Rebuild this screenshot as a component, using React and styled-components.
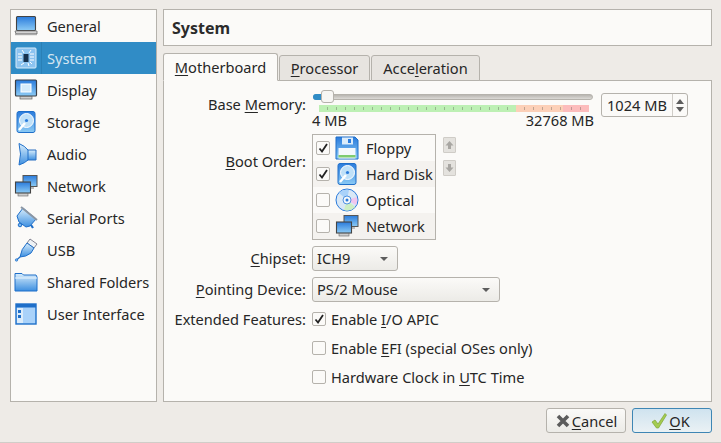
import React from "react";
import styled, { createGlobalStyle } from "styled-components";

const Global = createGlobalStyle`
  html, body { margin: 0; padding: 0; background: #eeebe7; }
  body { font-family: "Noto Sans", "Open Sans", sans-serif; font-size: 14.6px; color: #262626; }
`;

const Dialog = styled.div`
  width: 721px;
  height: 443px;
  box-sizing: border-box;
  padding: 9px 9px 0 10px;
  background: #eeebe7;
  border-bottom: 1px solid #d0cdc8;
  display: flex;
  flex-direction: column;
  overflow: hidden;
`;
const Top = styled.div`
  display: flex;
  gap: 6px;
  height: 393px;
`;
const Sidebar = styled.div`
  width: 147px;
  box-sizing: border-box;
  background: #fbfaf8;
  border: 1px solid #b5b2ac;
`;
const NavItem = styled.div`
  height: 32px;
  display: flex;
  align-items: center;
  padding-left: 3px;
  box-sizing: border-box;
  background: ${(p) => (p.$active ? "#308cc6" : "transparent")};
  color: ${(p) => (p.$active ? "#d4e6f2" : "#262626")};
`;
const NavIconCell = styled.div`
  width: 27px;
  height: 100%;
  flex: none;
  display: flex;
  align-items: center;
  border-right: 1px solid ${(p) => (p.$active ? "#2a80b6" : "transparent")};
`;
const NavText = styled.span`
  padding-left: 5px;
  line-height: 30px;
  white-space: nowrap;
`;
const Right = styled.div`
  flex: 1;
  display: flex;
  flex-direction: column;
`;
const Title = styled.div`
  height: 37px;
  box-sizing: border-box;
  background: #fbfaf8;
  border: 1px solid #b5b2ac;
  font-weight: 700;
  font-size: 16px;
  padding-left: 8px;
  line-height: 36px;
  margin-bottom: 7px;
  color: #2b2b2b;
`;
const TabBar = styled.div`
  display: flex;
  align-items: flex-end;
  height: 28px;
  gap: 1px;
  position: relative;
  z-index: 1;
  margin-bottom: -1px;
`;
const Tab = styled.div`
  box-sizing: border-box;
  width: ${(p) => p.$w}px;
  height: ${(p) => (p.$active ? 28 : 26)}px;
  border: 1px solid #b5b2ac;
  border-bottom: ${(p) => (p.$active ? "1px solid #fbfaf8" : "1px solid #b5b2ac")};
  border-radius: 3px 3px 0 0;
  background: ${(p) => (p.$active ? "#fbfaf8" : "#e7e4e0")};
  text-align: center;
  line-height: ${(p) => (p.$active ? 26 : 24)}px;
`;
const Pane = styled.div`
  flex: 1;
  box-sizing: border-box;
  background: #fbfaf8;
  border: 1px solid #b5b2ac;
  padding: 9px 0 0 10px;
  display: grid;
  grid-template-columns: 132px 1fr;
  column-gap: 6px;
  align-content: start;
`;
const Label = styled.div`
  text-align: right;
  line-height: 20px;
  white-space: nowrap;
  margin-top: ${(p) => p.$top || 0}px;
`;
const Field = styled.div`
  margin-top: ${(p) => p.$top || 0}px;
  min-width: 0;
`;
const MemoryRow = styled.div`
  display: flex;
  gap: 7px;
`;
const SliderCol = styled.div`
  width: 282px;
  flex: none;
`;
const Track = styled.div`
  position: relative;
  height: 6px;
  margin: 4px 1px 0;
  border-radius: 3px;
  background: linear-gradient(#b8b5b0, #dcdad6);
  border: 1px solid #b5b2ac;
  box-sizing: border-box;
`;
const TrackFill = styled.div`
  position: absolute;
  left: -1px;
  top: -1px;
  height: 6px;
  width: 10px;
  border-radius: 3px 0 0 3px;
  background: #308cc6;
`;
const Knob = styled.div`
  position: absolute;
  left: 7px;
  top: -5px;
  width: 13px;
  height: 13px;
  box-sizing: border-box;
  border: 1px solid #b5b2ac;
  border-radius: 3px;
  background: #f7f6f4;
`;
const Meter = styled.div`
  display: flex;
  margin: 5px 5px 0 7px;
  height: 7px;
`;
const MeterPart = styled.div`
  width: ${(p) => p.$w}px;
  background-color: ${(p) => p.$c};
  background-image: repeating-linear-gradient(
    90deg,
    transparent 0 8px,
    rgba(90, 90, 80, 0.38) 8px 9px
  );
  background-size: 100% 3px;
  background-position: 0 2px;
  background-repeat: no-repeat;
`;
const Scale = styled.div`
  display: flex;
  justify-content: space-between;
  line-height: 18px;
  margin-top: -1px;
`;
const Spin = styled.div`
  margin-top: 3px;
  width: 87px;
  height: 24px;
  box-sizing: border-box;
  border: 1px solid #b5b2ac;
  border-radius: 3px;
  background: #fbfaf8;
  padding-left: 5px;
  line-height: 22px;
  position: relative;
`;
const SpinArrows = styled.div`
  position: absolute;
  right: 0;
  top: 0;
  bottom: 0;
  width: 14px;
  border-left: 1px solid #d0cdc8;
  display: flex;
  flex-direction: column;
  align-items: center;
  justify-content: center;
  gap: 3px;
`;
const TriUp = styled.div`
  border-left: 4px solid transparent;
  border-right: 4px solid transparent;
  border-bottom: 5px solid #5d5d5d;
`;
const TriDown = styled.div`
  border-left: 4px solid transparent;
  border-right: 4px solid transparent;
  border-top: 5px solid #5d5d5d;
`;
const BootWrap = styled.div`
  display: flex;
  gap: 7px;
`;
const BootList = styled.div`
  width: 124px;
  height: 106px;
  box-sizing: border-box;
  border: 1px solid #b5b2ac;
  background: #fbfaf8;
`;
const BootRow = styled.div`
  height: 26px;
  display: flex;
  align-items: center;
  padding-left: 3px;
  background: ${(p) => (p.$alt ? "#f4f2ef" : "transparent")};
  svg.icon { margin: 0 7px 0 5px; flex: none; }
`;
const BootText = styled.span`
  margin-bottom: 1px;
`;
const Box = styled.span`
  width: 14px;
  height: 14px;
  box-sizing: border-box;
  border: 1px solid #b5b2ac;
  border-radius: 2px;
  background: #fbfaf8;
  display: inline-flex;
  align-items: center;
  justify-content: center;
  flex: none;
`;
const MoveCol = styled.div`
  display: flex;
  flex-direction: column;
  gap: 7px;
  padding-top: 3px;
`;
const MoveBtn = styled.div`
  width: 13px;
  height: 16px;
  box-sizing: border-box;
  border: 1px solid #cfccc7;
  background: #e4e2de;
  border-radius: 1px;
  display: flex;
  align-items: center;
  justify-content: center;
`;
const Combo = styled.div`
  width: ${(p) => p.$w}px;
  height: 25px;
  box-sizing: border-box;
  border: 1px solid #b5b2ac;
  border-radius: 3px;
  background: linear-gradient(#fbfaf8, #ecebe7);
  padding: 0 9px 0 4px;
  line-height: 23px;
  display: flex;
  justify-content: space-between;
  align-items: center;
`;
const ComboArrow = styled.div`
  border-left: 4px solid transparent;
  border-right: 4px solid transparent;
  border-top: 4px solid #5d5d5d;
`;
const Check = styled.div`
  display: flex;
  align-items: center;
  gap: 5px;
  height: 20px;
  white-space: nowrap;
`;
const Footer = styled.div`
  display: flex;
  justify-content: flex-end;
  gap: 6px;
  margin-top: 6px;
`;
const Button = styled.div`
  width: 80px;
  height: 25px;
  box-sizing: border-box;
  border: 1px solid ${(p) => (p.$default ? "#3e86b4" : "#b5b2ac")};
  border-radius: 3px;
  background: ${(p) =>
    p.$default
      ? "linear-gradient(#cfe3ef, #eaf1f4)"
      : "linear-gradient(#fbfaf8, #ecebe7)"};
  display: flex;
  align-items: center;
  justify-content: center;
  gap: 1px;
  padding-right: ${(p) => (p.$default ? 4 : 0)}px;
`;
const Mn = styled.span`
  text-decoration: underline;
  text-underline-offset: 2px;
`;

const Tick = () => (
  <svg width="12" height="12" viewBox="0 0 12 12">
    <path d="M2.5 6.5 L5 9.5 L10 2" fill="none" stroke="#222" strokeWidth="1.8" />
  </svg>
);

const Defs = () => (
  <svg width="0" height="0" style={{ position: "absolute" }}>
    <defs>
      <linearGradient id="blue" x1="0" y1="0" x2="0" y2="1">
        <stop offset="0" stopColor="#2a7bdc" />
        <stop offset="1" stopColor="#8ccbf5" />
      </linearGradient>
      <linearGradient id="pale" x1="0" y1="0" x2="0" y2="1">
        <stop offset="0" stopColor="#d9eefc" />
        <stop offset="1" stopColor="#3d8fe0" />
      </linearGradient>
      <linearGradient id="grey" x1="0" y1="0" x2="0" y2="1">
        <stop offset="0" stopColor="#f4f4f4" />
        <stop offset="1" stopColor="#b4b4b4" />
      </linearGradient>
    </defs>
  </svg>
);

const GeneralIcon = () => (
  <svg width="24" height="24" viewBox="0 0 24 24">
    <rect x="2.5" y="2.5" width="19" height="14" rx="1" fill="url(#blue)" stroke="#444" strokeWidth="1.1" />
    <path d="M1 17 L23 17 L23 20 L2 20 Z" fill="url(#grey)" stroke="#666" strokeWidth="0.8" />
    <rect x="1" y="20" width="22" height="1.2" fill="#aaa" />
  </svg>
);
const SystemIcon = () => (
  <svg width="24" height="24" viewBox="0 0 24 24">
    <rect x="2" y="2" width="20" height="20" rx="1" fill="#8cc3f0" stroke="#d8ecfa" strokeWidth="1" />
    <rect x="9.5" y="8" width="5" height="8" fill="#17324f" />
    <path d="M4 8h4M4 11h4M4 14h4M16 8h4M16 11h4M16 14h4M7 19l3-2M14 17l1 3M18 18l-2-2M8 4l2 3M15 7l2-3" stroke="#fff" strokeWidth="1" />
  </svg>
);
const DisplayIcon = () => (
  <svg width="24" height="24" viewBox="0 0 24 24">
    <rect x="1.5" y="2" width="21" height="16" rx="1" fill="url(#blue)" stroke="#3a3f46" strokeWidth="1.2" />
    <rect x="7" y="6" width="10" height="8" fill="#d5ebfb" stroke="#fff" strokeWidth="1" />
    <rect x="6" y="18.5" width="12" height="2.5" fill="#ccc" stroke="#666" strokeWidth="0.7" />
  </svg>
);
const StorageIcon = () => (
  <svg width="24" height="24" viewBox="0 0 24 24">
    <rect x="3" y="1.5" width="18" height="21" rx="2" fill="url(#blue)" stroke="#1f6fc9" strokeWidth="1" />
    <circle cx="12.5" cy="10.5" r="7" fill="#bfe0f8" stroke="#fff" strokeWidth="1" />
    <circle cx="12.5" cy="10.5" r="1.6" fill="#2a7bdc" />
    <path d="M5 20 L11 13" stroke="#fff" strokeWidth="2.4" />
  </svg>
);
const AudioIcon = () => (
  <svg width="24" height="24" viewBox="0 0 24 24">
    <path d="M13 8 L22 8 L22 18 L13 18 Z" fill="url(#pale)" stroke="#2a6fc0" strokeWidth="1" />
    <path d="M5 1.5 Q11 4 14 8 L14 18 Q11 21 5 23 Q8 12 5 1.5 Z" fill="url(#pale)" stroke="#1f6fc9" strokeWidth="1" />
  </svg>
);
const NetworkIcon = () => (
  <svg className="icon" width="24" height="24" viewBox="0 0 24 24">
    <rect x="9" y="1.5" width="14" height="11" fill="url(#blue)" stroke="#555" strokeWidth="1" />
    <path d="M13 13h7v2h-7z" fill="#bbb" />
    <rect x="1.5" y="8" width="15" height="11" fill="url(#blue)" stroke="#444" strokeWidth="1.1" />
    <rect x="4" y="19.5" width="10" height="2.5" fill="#ccc" stroke="#666" strokeWidth="0.6" />
  </svg>
);
const SerialIcon = () => (
  <svg width="24" height="24" viewBox="0 0 24 24">
    <path d="M9 2 L22 13 L16 20 L12 21 L5 16 L3 10 Z" fill="url(#pale)" stroke="#1f6fc9" strokeWidth="1" />
    <path d="M7 1 L23 14" stroke="#8b96a3" strokeWidth="2" />
    <circle cx="6" cy="19" r="1.8" fill="#7ab7ee" stroke="#1f6fc9" />
    <path d="M17 19 L19 22" stroke="#1f6fc9" strokeWidth="2.2" />
  </svg>
);
const UsbIcon = () => (
  <svg width="24" height="24" viewBox="0 0 24 24">
    <path d="M16 1 L23 6 L20 10 L13 5 Z" fill="#eef2f5" stroke="#667" strokeWidth="0.8" />
    <path d="M13 5 L20 10 L17 15 Q12 19 6 19 Q7 11 13 5 Z" fill="url(#pale)" stroke="#1f6fc9" strokeWidth="1" />
    <path d="M6 19 L2.5 22" stroke="#1f6fc9" strokeWidth="1.2" />
    <circle cx="2.5" cy="22" r="1.2" fill="#7ab7ee" stroke="#1f6fc9" strokeWidth="0.7" />
  </svg>
);
const FolderIcon = () => (
  <svg width="24" height="24" viewBox="0 0 24 24">
    <path d="M1 5 L1 3.5 L8 3.5 L9.5 5 L22 5 L23 7 L23 21 L1 21 Z" fill="url(#pale)" stroke="#1f6fc9" strokeWidth="1" />
    <path d="M1 8 L23 8" stroke="#eaf5fd" strokeWidth="1" />
  </svg>
);
const UiIcon = () => (
  <svg width="24" height="24" viewBox="0 0 24 24">
    <rect x="2" y="2" width="20" height="20" fill="#a9d2fa" stroke="#1f6fc9" strokeWidth="1.4" />
    <rect x="2" y="2" width="20" height="3.5" fill="#1f6fc9" />
    <rect x="3" y="6" width="6" height="15" fill="#dcecfa" />
    <rect x="4" y="8" width="3" height="3" fill="#1f6fc9" />
    <rect x="4" y="13" width="3" height="3" fill="#1f6fc9" />
  </svg>
);
const FloppyIcon = () => (
  <svg className="icon" width="24" height="24" viewBox="0 0 24 24">
    <path d="M1 1 L20 1 L23 4 L23 23 L1 23 Z" fill="url(#blue)" stroke="#1f6fc9" strokeWidth="1" />
    <rect x="7" y="1.5" width="11" height="7" fill="#dcecfa" />
    <rect x="13" y="3" width="3" height="4" fill="#2a7bdc" />
    <rect x="3.5" y="12" width="17" height="10.5" fill="#f4f8fb" />
    <rect x="3.5" y="19" width="17" height="2.5" fill="#7ecb70" />
  </svg>
);
const DiskIcon = () => (
  <svg className="icon" width="24" height="24" viewBox="0 0 24 24">
    <rect x="3" y="1.5" width="18" height="21" rx="2" fill="url(#blue)" stroke="#1f6fc9" strokeWidth="1" />
    <circle cx="12.5" cy="10.5" r="7" fill="#bfe0f8" stroke="#fff" strokeWidth="1" />
    <circle cx="12.5" cy="10.5" r="1.6" fill="#2a7bdc" />
    <path d="M5 20 L11 13" stroke="#fff" strokeWidth="2.4" />
  </svg>
);
const OpticalIcon = () => (
  <svg className="icon" width="24" height="24" viewBox="0 0 24 24">
    <circle cx="12" cy="12" r="11" fill="#d9e8f6" stroke="#2a7bdc" strokeWidth="1" />
    <path d="M12 12 L4 5 A11 11 0 0 1 14 2 Z" fill="#a9d2fa" />
    <path d="M12 12 L20 19 A11 11 0 0 1 9 22 Z" fill="#cdeec4" />
    <path d="M12 12 L22 9 A11 11 0 0 1 21 17 Z" fill="#f0c6ee" />
    <circle cx="12" cy="12" r="4" fill="#f4f8fb" stroke="#2a7bdc" strokeWidth="0.8" />
    <circle cx="12" cy="12" r="1.5" fill="#2a7bdc" />
  </svg>
);
const CancelIcon = () => (
  <svg width="16" height="16" viewBox="0 0 16 16">
    <path d="M3 3 L13 13 M13 3 L3 13" stroke="#5c5c5c" strokeWidth="3.6" />
  </svg>
);
const OkIcon = () => (
  <svg width="18" height="18" viewBox="0 0 18 18">
    <path d="M2 10 L5 8 L8 12 L15 1.5 L16.5 3 L8.5 16 L6.5 16 Z" fill="#a4cc50" stroke="#7ea334" strokeWidth="0.7" />
  </svg>
);

const nav = [
  ["General", GeneralIcon],
  ["System", SystemIcon],
  ["Display", DisplayIcon],
  ["Storage", StorageIcon],
  ["Audio", AudioIcon],
  ["Network", NetworkIcon],
  ["Serial Ports", SerialIcon],
  ["USB", UsbIcon],
  ["Shared Folders", FolderIcon],
  ["User Interface", UiIcon],
];

const boot = [
  ["Floppy", FloppyIcon, true],
  ["Hard Disk", DiskIcon, true],
  ["Optical", OpticalIcon, false],
  ["Network", NetworkIcon, false],
];

export default function App() {
  return (
    <Dialog>
      <Global />
      <Defs />
      <Top>
        <Sidebar>
          {nav.map(([name, Icon]) => (
            <NavItem key={name} $active={name === "System"}>
              <NavIconCell $active={name === "System"}>
                <Icon />
              </NavIconCell>
              <NavText>{name}</NavText>
            </NavItem>
          ))}
        </Sidebar>
        <Right>
          <Title>System</Title>
          <TabBar>
            <Tab $active $w={115}>
              <Mn>M</Mn>otherboard
            </Tab>
            <Tab $w={91}>
              <Mn>P</Mn>rocessor
            </Tab>
            <Tab $w={109}>
              Acce<Mn>l</Mn>eration
            </Tab>
          </TabBar>
          <Pane>
            <Label $top={4}>
              Base <Mn>M</Mn>emory:
            </Label>
            <Field>
              <MemoryRow>
                <SliderCol>
                  <Track>
                    <TrackFill />
                    <Knob />
                  </Track>
                  <Meter>
                    <MeterPart $w={197} $c="#bdf0b4" />
                    <MeterPart $w={47} $c="#fcd0b8" />
                    <MeterPart $w={26} $c="#fcbcbc" />
                  </Meter>
                  <Scale>
                    <span>4 MB</span>
                    <span>32768 MB</span>
                  </Scale>
                </SliderCol>
                <Spin>
                  1024 MB
                  <SpinArrows>
                    <TriUp />
                    <TriDown />
                  </SpinArrows>
                </Spin>
              </MemoryRow>
            </Field>
            <Label $top={22}>
              <Mn>B</Mn>oot Order:
            </Label>
            <Field $top={5}>
              <BootWrap>
                <BootList>
                  {boot.map(([name, Icon, on], i) => (
                    <BootRow key={name} $alt={i % 2 === 1}>
                      <Box>{on && <Tick />}</Box>
                      <Icon />
                      <BootText>{name}</BootText>
                    </BootRow>
                  ))}
                </BootList>
                <MoveCol>
                  <MoveBtn>
                    <svg width="9" height="10" viewBox="0 0 9 10">
                      <path d="M4.5 1 L8.5 5.5 L6 5.5 L6 9 L3 9 L3 5.5 L0.5 5.5 Z" fill="#a8a6a2" />
                    </svg>
                  </MoveBtn>
                  <MoveBtn>
                    <svg width="9" height="10" viewBox="0 0 9 10">
                      <path d="M4.5 9 L8.5 4.5 L6 4.5 L6 1 L3 1 L3 4.5 L0.5 4.5 Z" fill="#a8a6a2" />
                    </svg>
                  </MoveBtn>
                </MoveCol>
              </BootWrap>
            </Field>
            <Label $top={8}>
              <Mn>C</Mn>hipset:
            </Label>
            <Field $top={6}>
              <Combo $w={86}>
                ICH9
                <ComboArrow />
              </Combo>
            </Field>
            <Label $top={8}>
              <Mn>P</Mn>ointing Device:
            </Label>
            <Field $top={6}>
              <Combo $w={188}>
                PS/2 Mouse
                <ComboArrow />
              </Combo>
            </Field>
            <Label $top={7}>Extended Features:</Label>
            <Field $top={7}>
              <Check>
                <Box>
                  <Tick />
                </Box>
                <span>
                  Enable <Mn>I</Mn>/O APIC
                </span>
              </Check>
            </Field>
            <span />
            <Field $top={9}>
              <Check>
                <Box />
                <span>
                  Enable <Mn>E</Mn>FI (special OSes only)
                </span>
              </Check>
            </Field>
            <span />
            <Field $top={9}>
              <Check>
                <Box />
                <span>
                  Hardware Clock in <Mn>U</Mn>TC Time
                </span>
              </Check>
            </Field>
          </Pane>
        </Right>
      </Top>
      <Footer>
        <Button>
          <CancelIcon />
          <span>
            <Mn>C</Mn>ancel
          </span>
        </Button>
        <Button $default>
          <OkIcon />
          <span>
            <Mn>O</Mn>K
          </span>
        </Button>
      </Footer>
    </Dialog>
  );
}
